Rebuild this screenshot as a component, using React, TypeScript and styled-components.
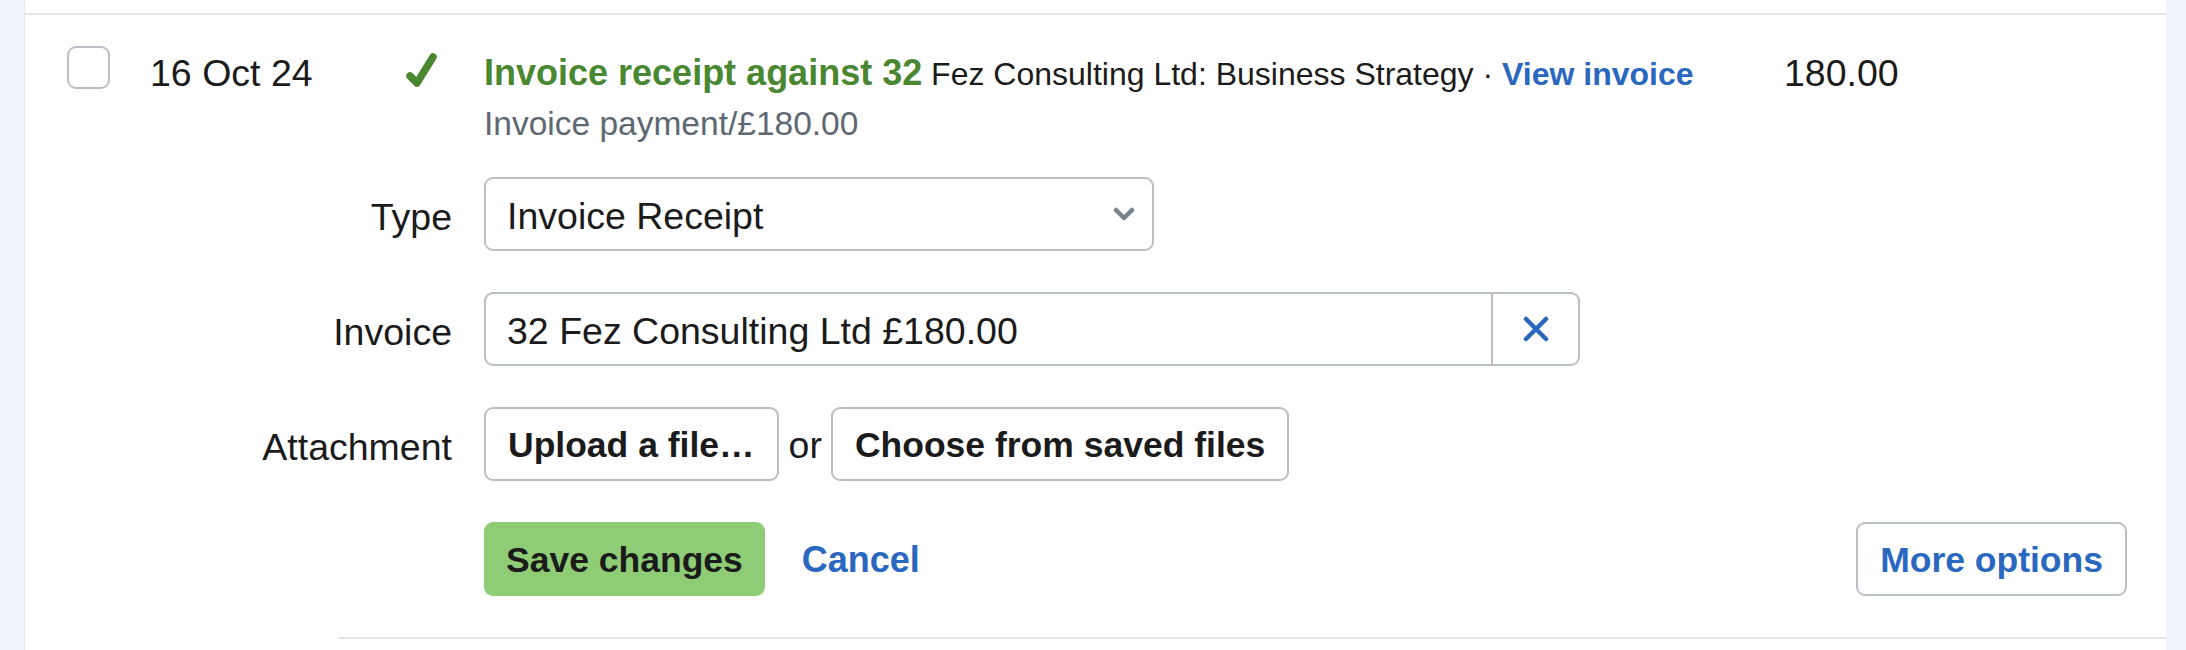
import styled, { createGlobalStyle } from "styled-components";

const GlobalStyle = createGlobalStyle`
  html, body {
    margin: 0;
    padding: 0;
    background: #eef3fb;
  }
  body {
    font-family: "Liberation Sans", Arial, sans-serif;
    color: #1b1b1b;
  }
  * {
    box-sizing: border-box;
  }
`;

const Page = styled.div`
  display: flex;
  height: 650px;
  padding: 0 20px 0 24px;
  background: #eef3fb;
`;

const Card = styled.div`
  flex: 1;
  background: #fff;
  border-left: 1px solid #e6e9ee;
  padding-top: 13px;
`;

const Entry = styled.div`
  border-top: 2px solid #e3e5ea;
  padding: 31px 39px 41px 42px;
`;

const MainRow = styled.div`
  display: flex;
  align-items: flex-start;
`;

const Checkbox = styled.div`
  width: 43px;
  height: 43px;
  flex-shrink: 0;
  border: 2px solid #b9bfc5;
  border-radius: 9px;
  background: #fff;
`;

const DateCell = styled.div`
  width: 253px;
  margin-left: 40px;
  padding-top: 3px;
  font-size: 37.5px;
  line-height: 48px;
`;

const StatusCell = styled.div`
  width: 81px;
  flex-shrink: 0;
  padding-top: 4px;
`;

const Description = styled.div`
  width: 1300px;
  flex-shrink: 0;
  padding-top: 3px;
`;

const Heading = styled.div`
  font-size: 32px;
  line-height: 48px;
  white-space: nowrap;
`;

const Title = styled.span`
  color: #4a8731;
  font-size: 36px;
  font-weight: 700;
`;

const Link = styled.a`
  color: #2a68c0;
  font-weight: 700;
  text-decoration: none;
  cursor: pointer;
`;

const SubLine = styled.div`
  margin-top: 6px;
  font-size: 33.5px;
  line-height: 40px;
  color: #5d6873;
`;

const Amount = styled.div`
  padding-top: 3px;
  font-size: 37.5px;
  line-height: 48px;
`;

const Form = styled.div`
  display: grid;
  grid-template-columns: 385px 1fr;
  column-gap: 32px;
  row-gap: 41px;
  margin-top: 33px;
`;

const Label = styled.div`
  align-self: center;
  padding-top: 5px;
  text-align: right;
  font-size: 37.5px;
  line-height: 48px;
`;

const Field = styled.div<{ $width: number }>`
  display: flex;
  align-items: center;
  width: ${(p) => p.$width}px;
  height: 74px;
  border: 2px solid #b9bfc5;
  border-radius: 9px;
  background: #fff;
  font-size: 37.5px;
`;

const FieldText = styled.div`
  flex: 1;
  padding: 4px 0 0 21px;
`;

const Chevron = styled.svg`
  margin-right: 16px;
`;

const ClearButton = styled.div`
  display: flex;
  align-items: center;
  justify-content: center;
  width: 87px;
  height: 100%;
  border-left: 2px solid #b9bfc5;
`;

const Inline = styled.div`
  display: flex;
  align-items: center;
`;

const Button = styled.button<{ $variant?: "primary" | "outline" }>`
  height: 74px;
  padding: 2px 22px 0;
  font-family: inherit;
  font-size: 35.5px;
  font-weight: 700;
  border-radius: 9px;
  cursor: pointer;
  background: ${(p) => (p.$variant === "primary" ? "#8ecc76" : "#fff")};
  color: ${(p) => (p.$variant === "outline" ? "#2a68c0" : "#1b1b1b")};
  border: ${(p) => (p.$variant === "primary" ? "none" : "2px solid #b9bfc5")};
`;

const Or = styled.span`
  margin: 0 9px 0 10px;
  padding-top: 2px;
  font-size: 37.5px;
`;

const CancelLink = styled(Link)`
  margin-left: 37px;
  padding-top: 2px;
  font-size: 36px;
`;

const Spacer = styled.div`
  flex: 1;
`;

const Divider = styled.div`
  height: 2px;
  margin-left: 314px;
  background: #e3e5ea;
`;

const CheckIcon = () => (
  <svg width="36" height="40" viewBox="0 0 36 40">
    <polyline
      points="7,26 14,33 30,7"
      fill="none"
      stroke="#4a8731"
      strokeWidth="7.5"
      strokeLinecap="round"
      strokeLinejoin="round"
    />
  </svg>
);

const CrossIcon = () => (
  <svg width="26" height="26" viewBox="0 0 26 26">
    <path
      d="M3 3 L23 23 M23 3 L3 23"
      stroke="#2a68c0"
      strokeWidth="4.5"
      strokeLinecap="round"
    />
  </svg>
);

export default function App() {
  return (
    <>
      <GlobalStyle />
      <Page>
        <Card>
          <Entry>
            <MainRow>
              <Checkbox />
              <DateCell>16 Oct 24</DateCell>
              <StatusCell>
                <CheckIcon />
              </StatusCell>
              <Description>
                <Heading>
                  <Title>Invoice receipt against 32</Title> Fez Consulting Ltd: Business Strategy ·{" "}
                  <Link>View invoice</Link>
                </Heading>
                <SubLine>Invoice payment/£180.00</SubLine>
              </Description>
              <Amount>180.00</Amount>
            </MainRow>

            <Form>
              <Label>Type</Label>
              <Field $width={670}>
                <FieldText>Invoice Receipt</FieldText>
                <Chevron width="24" height="16" viewBox="0 0 24 16">
                  <polyline
                    points="4,4 12,12 20,4"
                    fill="none"
                    stroke="#75838f"
                    strokeWidth="4.5"
                    strokeLinecap="round"
                    strokeLinejoin="round"
                  />
                </Chevron>
              </Field>

              <Label>Invoice</Label>
              <Field $width={1096}>
                <FieldText>32 Fez Consulting Ltd £180.00</FieldText>
                <ClearButton>
                  <CrossIcon />
                </ClearButton>
              </Field>

              <Label>Attachment</Label>
              <Inline>
                <Button>Upload a file…</Button>
                <Or>or</Or>
                <Button>Choose from saved files</Button>
              </Inline>

              <div />
              <Inline>
                <Button $variant="primary">Save changes</Button>
                <CancelLink>Cancel</CancelLink>
                <Spacer />
                <Button $variant="outline">More options</Button>
              </Inline>
            </Form>
          </Entry>
          <Divider />
        </Card>
      </Page>
    </>
  );
}
